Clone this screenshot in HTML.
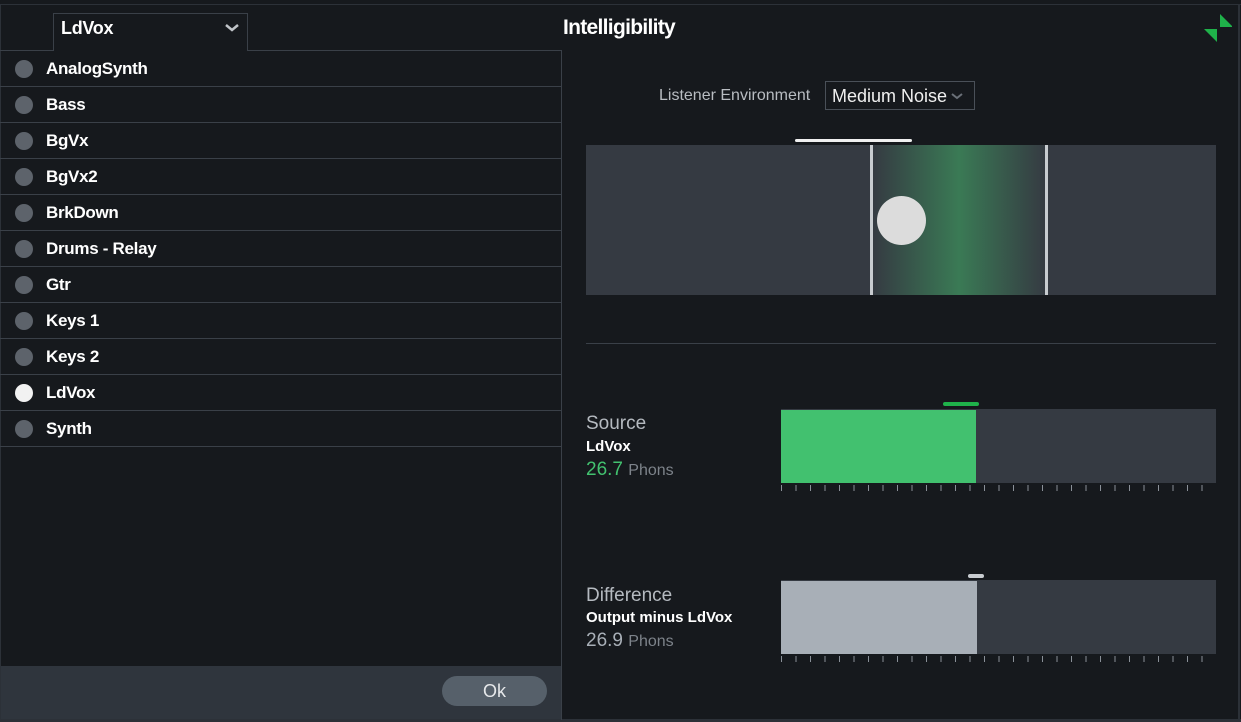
<!DOCTYPE html>
<html><head><style>
*{margin:0;padding:0;box-sizing:border-box}
body{width:1241px;height:722px;background:#16191d;font-family:"Liberation Sans",sans-serif;position:relative;overflow:hidden;color:#fff}
.a{position:absolute}
.row{position:absolute;left:0;width:561px;height:36px;border-bottom:1px solid #3a4048;font-size:17px;font-weight:bold;line-height:36px;padding-left:46px;letter-spacing:-0.3px}
.row i{position:absolute;left:15px;top:9px;width:18px;height:18px;border-radius:50%;background:#5d636b}
</style></head><body>
<div class="a" style="left:0;top:4px;width:1241px;height:1px;background:#2c3138"></div>
<div class="a" style="left:0;top:4px;width:1px;height:718px;background:#2c3138"></div>
<div class="a" style="left:1238px;top:4px;width:2px;height:718px;background:#2c3138"></div>
<div class="a" style="left:0;top:719px;width:1241px;height:3px;background:#2c3138"></div>
<div class="a" style="left:0;top:50px;width:561px;height:1px;background:#3a4048"></div>
<div class="a" style="left:53px;top:13px;width:195px;height:38px;border:1px solid #3a4048;border-bottom:none;background:#16191d"></div>
<div class="a" style="left:61px;top:18px;font-size:18px;font-weight:bold;letter-spacing:-0.3px">LdVox</div>
<svg class="a" style="left:224px;top:23px" width="16" height="10"><path d="M2 2 L8 7 L14 2" stroke="#c0c4c8" stroke-width="2.5" fill="none"/></svg>
<div class="a" style="left:561px;top:50px;width:1px;height:670px;background:#3a4048"></div>
<div class="row" style="top:51px"><i></i>AnalogSynth</div>
<div class="row" style="top:87px"><i></i>Bass</div>
<div class="row" style="top:123px"><i></i>BgVx</div>
<div class="row" style="top:159px"><i></i>BgVx2</div>
<div class="row" style="top:195px"><i></i>BrkDown</div>
<div class="row" style="top:231px"><i></i>Drums - Relay</div>
<div class="row" style="top:267px"><i></i>Gtr</div>
<div class="row" style="top:303px"><i></i>Keys 1</div>
<div class="row" style="top:339px"><i></i>Keys 2</div>
<div class="row" style="top:375px"><i style="background:#f2f2f2"></i>LdVox</div>
<div class="row" style="top:411px"><i></i>Synth</div>
<div class="a" style="left:1px;top:666px;width:560px;height:53px;background:#2f353d"></div>
<div class="a" style="left:442px;top:676px;width:105px;height:30px;border-radius:15px;background:#56606a;color:#e6e8ea;font-size:18px;text-align:center;line-height:30px">Ok</div>
<div class="a" style="left:563px;top:16px;font-size:21px;font-weight:bold;letter-spacing:-0.7px">Intelligibility</div>
<svg class="a" style="left:1202px;top:13px" width="30" height="30"><path d="M18 1 L18 14 L31 14Z M2 16 L15 16 L15 29Z" fill="#1fb24a"/></svg>
<div class="a" style="left:659px;top:87px;font-size:16px;color:#b8bcc1">Listener Environment</div>
<div class="a" style="left:825px;top:81px;width:150px;height:29px;border:1px solid #4a5058;font-size:18px;line-height:29px;padding-left:6px;color:#f0f0f0">Medium Noise</div>
<svg class="a" style="left:950px;top:92px" width="14" height="9"><path d="M2 2 L7 6 L12 2" stroke="#6a7078" stroke-width="2" fill="none"/></svg>
<div class="a" style="left:795px;top:139px;width:117px;height:3px;border-radius:2px;background:#f0f0f0"></div>
<div class="a" style="left:586px;top:145px;width:630px;height:150px;background:#353a42"></div>
<div class="a" style="left:872px;top:145px;width:174px;height:150px;background:linear-gradient(90deg,#353a42,#3a7a55 50%,#353a42)"></div>
<div class="a" style="left:870px;top:145px;width:3px;height:150px;background:#c8ccd0"></div>
<div class="a" style="left:1045px;top:145px;width:3px;height:150px;background:#c8ccd0"></div>
<div class="a" style="left:877px;top:196px;width:49px;height:49px;border-radius:50%;background:#dcdcdc"></div>
<div class="a" style="left:586px;top:343px;width:630px;height:1px;background:#3a4048"></div>
<div class="a" style="left:586px;top:413px;font-size:19px;color:#b5bac0">Source</div>
<div class="a" style="left:586px;top:438px;font-size:15px;font-weight:bold">LdVox</div>
<div class="a" style="left:586px;top:459px;font-size:19px;color:#42c16f">26.7 <span style="font-size:16px;color:#7d838a">Phons</span></div>
<div class="a" style="left:943px;top:402px;width:36px;height:4px;border-radius:2px;background:#1fb24a"></div>
<div class="a" style="left:781px;top:409px;width:435px;height:74px;background:#353a42"></div>
<div class="a" style="left:781px;top:410px;width:195px;height:73px;background:#42c16f"></div>
<div class="a" style="left:781px;top:485px;width:435px;height:6px;background:repeating-linear-gradient(90deg,#8a9098 0 1px,transparent 1px 14.5px)"></div>
<div class="a" style="left:586px;top:585px;font-size:19px;color:#b5bac0">Difference</div>
<div class="a" style="left:586px;top:609px;font-size:15px;font-weight:bold">Output minus LdVox</div>
<div class="a" style="left:586px;top:630px;font-size:19px;color:#a8afb7">26.9 <span style="font-size:16px;color:#7d838a">Phons</span></div>
<div class="a" style="left:968px;top:574px;width:16px;height:4px;border-radius:2px;background:#c8ccd0"></div>
<div class="a" style="left:781px;top:580px;width:435px;height:74px;background:#353a42"></div>
<div class="a" style="left:781px;top:581px;width:196px;height:73px;background:#a8afb7"></div>
<div class="a" style="left:781px;top:656px;width:435px;height:6px;background:repeating-linear-gradient(90deg,#8a9098 0 1px,transparent 1px 14.5px)"></div>
</body></html>
